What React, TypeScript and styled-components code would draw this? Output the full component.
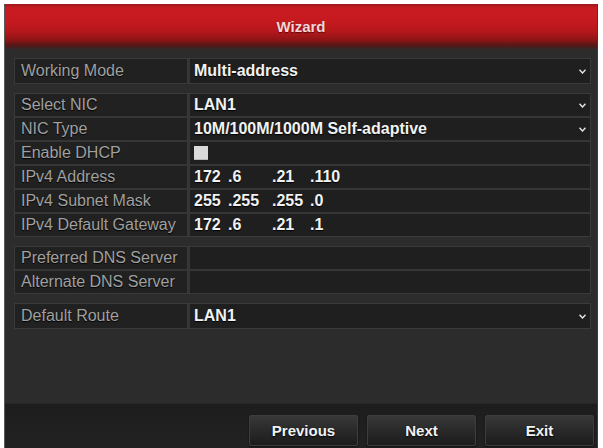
import styled, { createGlobalStyle } from "styled-components";

const GlobalStyle = createGlobalStyle`
  html, body {
    margin: 0;
    padding: 0;
    background: #ffffff;
  }
  body {
    font-family: "Liberation Sans", Arial, sans-serif;
    overflow: hidden;
  }
`;

// Fondo blanco alrededor de la ventana
const Page = styled.div`
  width: 603px;
  height: 448px;
  padding: 4px 5px 0 4px;
  box-sizing: border-box;
  overflow: hidden;
`;

const Window = styled.div`
  width: 594px;
  height: 444px;
  display: flex;
  flex-direction: column;
  background: #2c2c2c;
  border-left: 1px solid #5a5a5a;
  border-right: 1px solid #3a3a3a;
  box-sizing: border-box;
`;

const TitleBar = styled.div`
  height: 46px;
  flex: none;
  display: flex;
  align-items: center;
  justify-content: center;
  padding-bottom: 2px;
  box-sizing: border-box;
  background: linear-gradient(
    to bottom,
    #9c1a1c 0px,
    #c81c22 4px,
    #c71a20 16px,
    #b3171b 28px,
    #8e1416 36px,
    #5a1616 41px,
    #2c2c2c 46px
  );
  color: #f5d6d6;
  font-weight: bold;
  font-size: 15px;
  text-shadow: 0 1px 1px rgba(0, 0, 0, 0.5);
`;

const Content = styled.div`
  flex: 1;
  display: flex;
  flex-direction: column;
  gap: 9px;
  padding: 8px 6px 0 9px;
`;

// Grupo de filas con marco
const Group = styled.div`
  display: flex;
  flex-direction: column;
  gap: 2px;
  background: #363636;
  border: 1px solid #3a3a3a;
`;

const Row = styled.div<{ $tall?: boolean }>`
  display: grid;
  grid-template-columns: 172px 1fr;
  gap: 3px;
  height: ${(p) => (p.$tall ? 24 : 22)}px;
`;

const Label = styled.div`
  display: flex;
  align-items: center;
  padding-left: 6px;
  background: #212121;
  color: #a0a0a0;
  font-size: 16px;
  text-shadow: 0 1px 1px #000;
  white-space: nowrap;
`;

const Value = styled.div`
  position: relative;
  display: flex;
  align-items: center;
  padding-left: 4px;
  background: #1f1f1f;
  color: #f2f2f2;
  font-size: 16px;
  font-weight: bold;
  text-shadow: 0 1px 1px #000;
  white-space: nowrap;
`;

const Arrow = styled.svg`
  position: absolute;
  right: 4px;
  top: 50%;
  margin-top: -2px;
`;

const Check = styled.span`
  width: 14px;
  height: 14px;
  background: #dadada;
  box-shadow: inset 0 -1px 0 #b8b8b8;
`;

const IpGrid = styled.div`
  display: grid;
  grid-template-columns: 34px 44px 38px auto;
`;

const Footer = styled.div`
  height: 45px;
  flex: none;
  display: flex;
  justify-content: flex-end;
  gap: 9px;
  padding: 11px 3px 0 0;
  box-sizing: border-box;
  background: linear-gradient(to bottom, #1d1d1d, #222222);
  border-top: 1px solid #262626;
`;

const Button = styled.button`
  width: 109px;
  height: 31px;
  border: 1px solid #3e3e3e;
  border-radius: 2px;
  background: linear-gradient(to bottom, #383838, #282828 55%, #1c1c1c);
  box-shadow: 0 1px 2px rgba(0, 0, 0, 0.6);
  color: #f2f2f2;
  font-family: "Liberation Sans", Arial, sans-serif;
  font-size: 15px;
  font-weight: bold;
  text-shadow: 0 1px 2px #000;
  cursor: pointer;
`;

const Chevron = () => (
  <Arrow width="7" height="5" viewBox="0 0 7 5">
    <path d="M0.5 0.8 L3.5 4 L6.5 0.8" fill="none" stroke="#e6e6e6" strokeWidth="1.4" />
  </Arrow>
);

const Ip = ({ parts }: { parts: string[] }) => (
  <IpGrid>
    {parts.map((p, i) => (
      <span key={i}>{i === 0 ? p : "." + p}</span>
    ))}
  </IpGrid>
);

type Field = { label: string; value?: React.ReactNode; select?: boolean };

const groups: { tall?: boolean; fields: Field[] }[] = [
  { tall: true, fields: [{ label: "Working Mode", value: "Multi-address", select: true }] },
  {
    fields: [
      { label: "Select NIC", value: "LAN1", select: true },
      { label: "NIC Type", value: "10M/100M/1000M Self-adaptive", select: true },
      { label: "Enable DHCP", value: <Check /> },
      { label: "IPv4 Address", value: <Ip parts={["172", "6", "21", "110"]} /> },
      { label: "IPv4 Subnet Mask", value: <Ip parts={["255", "255", "255", "0"]} /> },
      { label: "IPv4 Default Gateway", value: <Ip parts={["172", "6", "21", "1"]} /> },
    ],
  },
  { fields: [{ label: "Preferred DNS Server" }, { label: "Alternate DNS Server" }] },
  { tall: true, fields: [{ label: "Default Route", value: "LAN1", select: true }] },
];

export default function App() {
  return (
    <>
      <GlobalStyle />
      <Page>
        <Window>
          <TitleBar>Wizard</TitleBar>
          <Content>
            {groups.map((g, gi) => (
              <Group key={gi}>
                {g.fields.map((f) => (
                  <Row key={f.label} $tall={g.tall}>
                    <Label>{f.label}</Label>
                    <Value>
                      {f.value}
                      {f.select && <Chevron />}
                    </Value>
                  </Row>
                ))}
              </Group>
            ))}
          </Content>
          <Footer>
            <Button>Previous</Button>
            <Button>Next</Button>
            <Button>Exit</Button>
          </Footer>
        </Window>
      </Page>
    </>
  );
}
